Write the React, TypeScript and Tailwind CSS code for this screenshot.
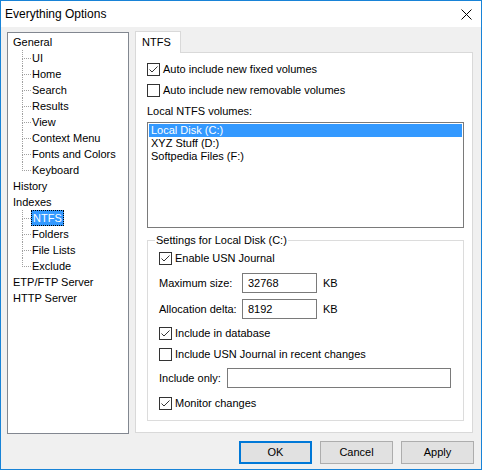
import React from "react";

const font = { fontFamily: '"Liberation Sans", Arial, sans-serif' };

function Check({ checked }: { checked?: boolean }) {
  return (
    <div className="w-[13px] h-[13px] border border-[#333333] bg-white shrink-0 flex items-center justify-center">
      {checked && (
        <svg width="11" height="11" viewBox="0 0 11 11">
          <polyline points="1.5,5.5 4,8 9.5,2.5" fill="none" stroke="#333333" strokeWidth="1" />
        </svg>
      )}
    </div>
  );
}

function CheckRow({ checked, label, className }: { checked?: boolean; label: string; className?: string }) {
  return (
    <div className={"flex items-center h-[13px] " + (className || "")}>
      <Check checked={checked} />
      <span className="ml-[3px] leading-[13px] whitespace-nowrap">{label}</span>
    </div>
  );
}

function Root({ label }: { label: string }) {
  return <div className="h-[16px] leading-[16px] pl-[5px] whitespace-nowrap">{label}</div>;
}

function Child({ label, last, selected }: { label: string; last?: boolean; selected?: boolean }) {
  return (
    <div className="h-[16px] pl-[14px] flex">
      <div className="w-[9px] h-[16px] flex flex-col shrink-0">
        <div className="h-[9px] border-l border-b border-dotted border-[#a0a0a0]" />
        <div className={"h-[7px] " + (last ? "" : "border-l border-dotted border-[#a0a0a0]")} />
      </div>
      {selected ? (
        <span className="h-[16px] leading-[14px] px-[1px] bg-[#3399ff] text-white border border-dotted border-black whitespace-nowrap">
          {label}
        </span>
      ) : (
        <span className="h-[16px] leading-[16px] px-[1px] whitespace-nowrap">{label}</span>
      )}
    </div>
  );
}

function Btn({ label, primary }: { label: string; primary?: boolean }) {
  return (
    <div
      className={
        "w-[73px] h-[23px] bg-[#e1e1e1] flex items-center justify-center " +
        (primary ? "border-2 border-[#0078d7]" : "border border-[#adadad]")
      }
    >
      {label}
    </div>
  );
}

export default function App() {
  return (
    <div
      style={font}
      className="w-[482px] h-[470px] border border-[#1883d7] bg-[#f0f0f0] flex flex-col text-[11px] text-black overflow-hidden"
    >
      {/* Title bar */}
      <div className="h-[26px] bg-white flex items-center justify-between pl-[4px] pr-[9px] shrink-0">
        <span className="text-[12px]">Everything Options</span>
        <svg width="11" height="11" viewBox="0 0 11 11">
          <path d="M0.5 0.5 L10.5 10.5 M10.5 0.5 L0.5 10.5" stroke="#000" strokeWidth="1" />
        </svg>
      </div>

      {/* Body */}
      <div className="flex items-start h-[407px] shrink-0">
        {/* Tree */}
        <div className="ml-[6px] mt-[5px] w-[122px] h-[402px] border border-[#828790] bg-white pt-[1px] shrink-0">
          <Root label="General" />
          <Child label="UI" />
          <Child label="Home" />
          <Child label="Search" />
          <Child label="Results" />
          <Child label="View" />
          <Child label="Context Menu" />
          <Child label="Fonts and Colors" />
          <Child label="Keyboard" last />
          <Root label="History" />
          <Root label="Indexes" />
          <Child label="NTFS" selected />
          <Child label="Folders" />
          <Child label="File Lists" />
          <Child label="Exclude" last />
          <Root label="ETP/FTP Server" />
          <Root label="HTTP Server" />
        </div>

        {/* Tabs */}
        <div className="ml-[6px] mt-[4px] w-[338px] flex flex-col shrink-0">
          <div className="flex h-[21px]">
            <div className="w-[46px] h-[22px] bg-white border border-b-0 border-[#d9d9d9] pl-[6px] leading-[20px] relative z-10">
              NTFS
            </div>
          </div>
          <div className="h-[381px] bg-white border border-[#d9d9d9] pt-[10px] pl-[11px]">
            <CheckRow checked label="Auto include new fixed volumes" />
            <CheckRow label="Auto include new removable volumes" className="mt-[8px]" />
            <div className="mt-[7px] h-[14px] leading-[14px]">Local NTFS volumes:</div>
            <div className="mt-[4px] w-[317px] h-[106px] border border-[#7a7a7a] bg-white pt-[1px] px-[1px]">
              <div className="h-[13px] leading-[13px] pl-[2px] bg-[#3399ff] text-white">Local Disk (C:)</div>
              <div className="h-[13px] leading-[13px] pl-[2px]">XYZ Stuff (D:)</div>
              <div className="h-[13px] leading-[13px] pl-[2px]">Softpedia Files (F:)</div>
            </div>

            {/* Group box */}
            <div className="mt-[12px] w-[317px] h-[181px] border border-[#dcdcdc] flex flex-col">
              <span className="-mt-[8px] ml-[7px] px-[1px] bg-white leading-[14px] self-start">
                Settings for Local Disk (C:)
              </span>
              <div className="pl-[11px] flex flex-col">
                <CheckRow checked label="Enable USN Journal" className="mt-[5px]" />
                <div className="mt-[8px] h-[20px] flex items-center">
                  <span className="w-[83px]">Maximum size:</span>
                  <div className="w-[75px] h-[20px] border border-[#7a7a7a] bg-white pl-[5px] leading-[18px]">32768</div>
                  <span className="ml-[6px]">KB</span>
                </div>
                <div className="mt-[6px] h-[20px] flex items-center">
                  <span className="w-[83px]">Allocation delta:</span>
                  <div className="w-[75px] h-[20px] border border-[#7a7a7a] bg-white pl-[5px] leading-[18px]">8192</div>
                  <span className="ml-[6px]">KB</span>
                </div>
                <CheckRow checked label="Include in database" className="mt-[8px]" />
                <CheckRow label="Include USN Journal in recent changes" className="mt-[8px]" />
                <div className="mt-[7px] h-[20px] flex items-center">
                  <span className="w-[68px]">Include only:</span>
                  <div className="w-[224px] h-[20px] border border-[#7a7a7a] bg-white" />
                </div>
                <CheckRow checked label="Monitor changes" className="mt-[9px]" />
              </div>
            </div>
          </div>
        </div>
      </div>

      {/* Buttons */}
      <div className="mt-[7px] flex justify-end gap-[8px] pr-[7px] shrink-0">
        <Btn label="OK" primary />
        <Btn label="Cancel" />
        <Btn label="Apply" />
      </div>
    </div>
  );
}
